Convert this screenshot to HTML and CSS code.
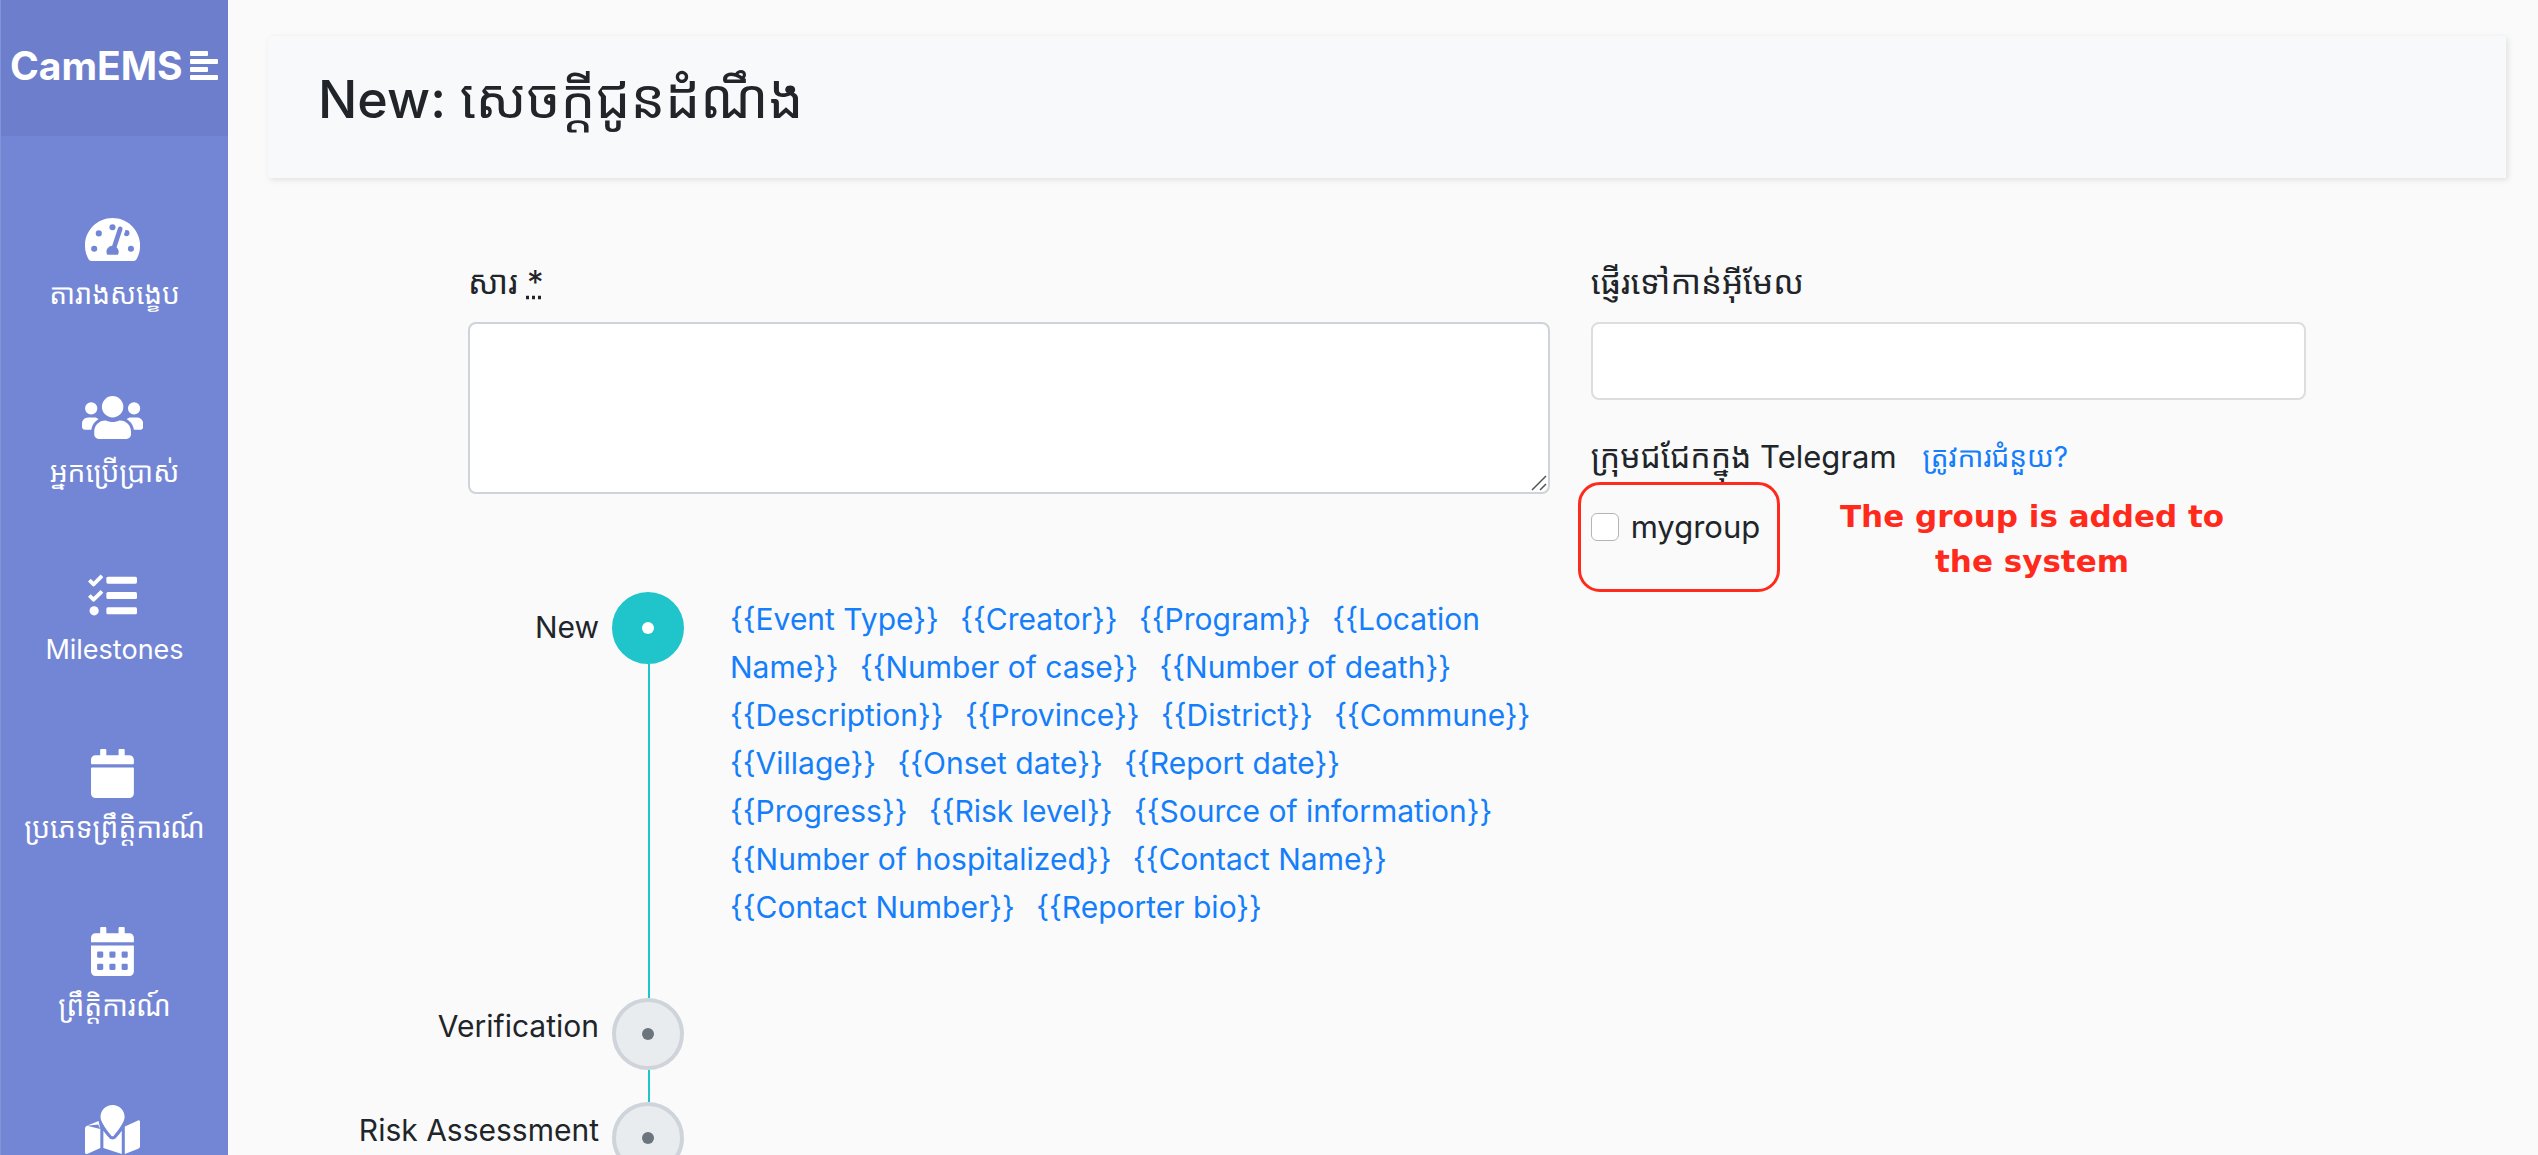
FILE: index.html
```html
<!DOCTYPE html>
<html lang="km">
<head>
<meta charset="utf-8">
<title>CamEMS</title>
<link rel="stylesheet" href="styles.css">
</head>
<body>
<div class="layout">
  <aside class="sidebar">
    <div class="brand">
      <span>CamEMS</span>
      <button class="brand-toggle" type="button" aria-label="Menu">
        <svg width="28" height="30" viewBox="0 0 28 30" fill="#fff"><rect y="0" width="18" height="5" rx="1"/><rect y="8" width="28" height="5" rx="1"/><rect y="16" width="18" height="5" rx="1"/><rect y="24" width="28" height="5" rx="1"/></svg>
      </button>
    </div>
    <nav class="menu">
      <a class="menu-item" href="#">
        <svg class="icon" viewBox="0 0 576 512"><path fill-rule="evenodd" d="M288 32C129 32 0 161 0 320c0 53 14 102 39 145 6 9 16 15 27 15h444c11 0 21-6 27-15 25-43 39-92 39-145C576 161 447 32 288 32zM288 96a32 32 0 1 1-2 64 32 32 0 0 1 2-64zM96 384a32 32 0 1 1 0-64 32 32 0 0 1 0 64zM144 224a32 32 0 1 1 0-64 32 32 0 0 1 0 64zM391 152l-61 184c13 11 22 28 22 48 0 12-3 23-9 32H233c-5-9-9-20-9-32 0-34 27-61 60-64l61-183c4-12 18-19 31-15 12 4 19 18 15 30zM407 207l16-49c3-1 6-2 9-2a32 32 0 1 1 0 66c-11 0-20-6-25-15zM480 384a32 32 0 1 1 0-64 32 32 0 0 1 0 64z"/></svg>
        <span>តារាងសង្ខេប</span>
      </a>
      <a class="menu-item" href="#">
        <svg class="icon" viewBox="0 0 640 512"><path d="M96 224a64 64 0 1 0 0-128 64 64 0 0 0 0 128zm448 0a64 64 0 1 0 0-128 64 64 0 0 0 0 128zm32 32h-64c-18 0-34 7-45 19 40 22 69 62 75 109h66c18 0 32-14 32-32v-32c0-35-29-64-64-64zm-256 0a112 112 0 1 0 0-224 112 112 0 0 0 0 224zm77 32h-8c-21 10-44 16-69 16s-48-6-69-16h-8c-64 0-115 52-115 115v29c0 26 21 48 48 48h288c27 0 48-22 48-48v-29c0-63-51-115-115-115zm-224-13c-11-12-27-19-45-19H64c-35 0-64 29-64 64v32c0 18 14 32 32 32h66c6-47 35-87 75-109z"/></svg>
        <span>អ្នកប្រើប្រាស់</span>
      </a>
      <a class="menu-item" href="#">
        <svg class="icon" viewBox="0 0 512 512"><g fill="none" stroke="#fff" stroke-width="40" stroke-linejoin="round"><path d="M14 96l44 44 88-88M14 256l44 44 88-88"/></g><circle cx="64" cy="416" r="48"/><rect x="192" y="60" width="320" height="72" rx="16"/><rect x="192" y="220" width="320" height="72" rx="16"/><rect x="192" y="380" width="320" height="72" rx="16"/></svg>
        <span lang="en">Milestones</span>
      </a>
      <a class="menu-item" href="#">
        <svg class="icon" viewBox="0 0 448 512"><path d="M12 192h424c7 0 12 5 12 12v260c0 27-21 48-48 48H48c-27 0-48-21-48-48V204c0-7 5-12 12-12zm436-44v-36c0-27-21-48-48-48h-48V12c0-7-5-12-12-12h-40c-7 0-12 5-12 12v52H160V12c0-7-5-12-12-12h-40c-7 0-12 5-12 12v52H48c-27 0-48 21-48 48v36c0 7 5 12 12 12h424c7 0 12-5 12-12z"/></svg>
        <span>ប្រភេទព្រឹត្តិការណ៍</span>
      </a>
      <a class="menu-item" href="#">
        <svg class="icon" viewBox="0 0 448 512"><path fill-rule="evenodd" d="M0 464c0 27 21 48 48 48h352c27 0 48-21 48-48V192H0v272zM320 268q0-12 12-12h40q12 0 12 12v40q0 12-12 12h-40q-12 0-12-12zm0 128q0-12 12-12h40q12 0 12 12v40q0 12-12 12h-40q-12 0-12-12zM192 268q0-12 12-12h40q12 0 12 12v40q0 12-12 12h-40q-12 0-12-12zm0 128q0-12 12-12h40q12 0 12 12v40q0 12-12 12h-40q-12 0-12-12zM64 268q0-12 12-12h40q12 0 12 12v40q0 12-12 12H76q-12 0-12-12zm0 128q0-12 12-12h40q12 0 12 12v40q0 12-12 12H76q-12 0-12-12zM448 160v-48c0-27-21-48-48-48h-48V12c0-7-5-12-12-12h-40c-7 0-12 5-12 12v52H160V12c0-7-5-12-12-12h-40c-7 0-12 5-12 12v52H48c-27 0-48 21-48 48v48z"/></svg>
        <span>ព្រឹត្តិការណ៍</span>
      </a>
      <a class="menu-item" href="#" aria-label="Map">
        <svg class="icon" viewBox="0 0 576 512"><path d="M288 0c-70 0-126 56-126 126 0 56 82 159 113 195 7 8 19 8 26 0 31-36 113-139 113-195C414 56 358 0 288 0zM20 216C8 221 0 233 0 246v250c0 11 11 19 22 15l138-63V252c-9-16-16-32-22-47L20 216zM20 216L142 168 160 252zM288 360c-14 0-28-6-37-17-20-23-41-49-59-75v180l192 64V268c-18 26-39 52-59 75-9 11-23 17-37 17zm266-199l-138 63v288l140-56c12-5 20-17 20-30V176c0-11-11-19-22-15z"/></svg>
      </a>
    </nav>
  </aside>

  <main class="main">
    <header class="page-head"><h1>New: <span>សេចក្តីជូនដំណឹង</span></h1></header>

    <form class="form">
      <div class="col-message">
        <div class="field message">
          <label for="message">សារ <abbr title="required">*</abbr></label>
          <div class="textarea-wrap">
            <textarea id="message"></textarea>
            <svg class="grip" width="16" height="16" viewBox="0 0 16 16" stroke="#555" stroke-width="1.5"><path d="M1 15L15 1M9 15l6-6"/></svg>
          </div>
        </div>

        <ol class="steps">
          <li class="step active">
            <span class="step-name">New</span>
            <span class="marker"><i class="dot"></i></span>
            <div class="tags">
              <a href="#">{{Event Type}}</a> <a href="#">{{Creator}}</a> <a href="#">{{Program}}</a> <a href="#">{{Location Name}}</a> <a href="#">{{Number of case}}</a> <a href="#">{{Number of death}}</a> <a href="#">{{Description}}</a> <a href="#">{{Province}}</a> <a href="#">{{District}}</a> <a href="#">{{Commune}}</a> <a href="#">{{Village}}</a> <a href="#">{{Onset date}}</a> <a href="#">{{Report date}}</a> <a href="#">{{Progress}}</a> <a href="#">{{Risk level}}</a> <a href="#">{{Source of information}}</a> <a href="#">{{Number of hospitalized}}</a> <a href="#">{{Contact Name}}</a> <a href="#">{{Contact&nbsp;Number}}</a> <a href="#">{{Reporter bio}}</a>
            </div>
          </li>
          <li class="step">
            <span class="step-name">Verification</span>
            <span class="marker"><i class="dot"></i></span>
          </li>
          <li class="step">
            <span class="step-name">Risk Assessment</span>
            <span class="marker"><i class="dot"></i></span>
          </li>
        </ol>
      </div>

      <div class="col-targets">
        <div class="field">
          <label for="email">ផ្ញើរទៅកាន់អ៊ីមែល</label>
          <input class="text-input" id="email" type="text">
        </div>
        <div class="group-head">
          <span><span class="km">ក្រុមជជែកក្នុង</span> Telegram</span>
          <a class="help" href="#">ត្រូវការជំនួយ?</a>
        </div>
        <div class="group-row">
          <div class="check">
            <input id="mygroup" type="checkbox">
            <label for="mygroup">mygroup</label>
            <span class="highlight"></span>
          </div>
          <p class="note">The group is added to the system</p>
        </div>
      </div>
    </form>
  </main>
</div>
</body>
</html>
```
FILE: styles.css
```css
* { box-sizing: border-box; }

body {
  margin: 0;
  background: #fafafa;
  color: #212529;
  font: 31px/48px Inter, "Noto Sans Khmer", "Khmer OS", sans-serif;
}

a { color: #147efb; text-decoration: none; }

.layout { display: flex; height: 100vh; overflow: hidden; }

/* Sidebar */
.sidebar {
  flex: 0 0 228px;
  min-width: 0;
  background: #7386d5;
  border-left: 1px solid #8293da;
  color: #fff;
}
.brand {
  display: flex;
  align-items: center;
  justify-content: space-between;
  height: 136px;
  padding: 0 10px 4px 9px;
  background: #6d7fcc;
  font-size: 39px;
  font-weight: 700;
}
.brand-toggle { padding: 0; border: 0; background: none; line-height: 0; }
.menu { padding-top: 79px; }
.menu-item {
  display: flex;
  flex-direction: column;
  align-items: center;
  height: 178px;
  color: #fff;
  font-size: 28px;
  white-space: nowrap;
}
.menu-item span { margin-top: 6px; }
.menu-item span:lang(en) { font-size: 27px; }
.icon { height: 49px; margin-right: 4px; fill: #fff; flex: none; }

/* Page */
.main { flex: 1; min-width: 0; padding: 36px 32px 0 40px; }
.page-head {
  height: 142px;
  padding: 29px 50px;
  background: #f8f9fb;
  box-shadow: 2px 2px 6px rgba(0, 0, 0, .1);
}
h1 { margin: 0; font-size: 52px; line-height: 66px; font-weight: 500; }
h1 span { font-size: 55px; font-weight: 400; }

.form {
  display: grid;
  grid-template-columns: 1281fr 715fr;
  gap: 41px;
  padding: 80px 200px 0 0;
}
.field label { display: block; margin-bottom: 16px; font-size: 33px; }
.km { font-size: 32px; }
.message { padding-left: 200px; }
.textarea-wrap { position: relative; }
textarea, .text-input {
  display: block;
  width: 100%;
  border: 2px solid #ced4da;
  border-radius: 8px;
  background: #fff;
  font: inherit;
  padding: 12px 24px;
}
textarea { height: 172px; resize: none; }
.text-input { height: 78px; border-color: #ddd; }
.grip { position: absolute; right: 3px; bottom: 3px; }

/* Steps */
.steps { list-style: none; margin: 98px 0 0; padding: 0; }
.step {
  display: grid;
  grid-template-columns: 331px 72px 1fr;
  column-gap: 13px;
  min-height: 104px;
}
.step-name { padding-top: 4px; font-size: 30px; text-align: right; }
.active .step-name { padding-top: 11px; }
.marker { display: flex; flex-direction: column; }
.marker::after {
  content: "";
  flex: 1;
  width: 2px;
  margin-left: 36px;
  background: #20c5cb;
}
.dot {
  display: grid;
  place-items: center;
  width: 72px;
  height: 72px;
  border: 4px solid #ced4da;
  border-radius: 50%;
  background: #e9ecef;
}
.dot::after {
  content: "";
  width: 12px;
  height: 12px;
  border-radius: 50%;
  background: #6c757d;
}
.active .dot { background: #20c5cb; border-color: #20c5cb; }
.active .dot::after { background: #fff; }
.tags { padding: 3px 0 67px 33px; font-size: 30px; }
.tags a { margin-right: 13px; }

/* Targets */
.group-head { display: flex; gap: 26px; margin-top: 33px; white-space: nowrap; }
.help { font-size: 28px; }
.group-row { display: flex; align-items: flex-start; justify-content: space-between; }
.check { display: flex; align-items: center; gap: 12px; position: relative; margin-top: 22px; }
.check input {
  appearance: none;
  width: 28px;
  height: 28px;
  margin: 0;
  border: 1px solid #b5b5b5;
  border-radius: 6px;
  background: #fff;
}
.highlight {
  position: absolute;
  inset: -21px -20px -41px -13px;
  border: 3px solid #ff2a1c;
  border-radius: 22px;
  pointer-events: none;
}
.note {
  width: 400px;
  margin: 13px 74px 0 0;
  color: #ff2a1c;
  font-family: "DejaVu Sans", sans-serif;
  font-size: 31px;
  line-height: 45px;
  font-weight: 700;
  text-align: center;
}
```
